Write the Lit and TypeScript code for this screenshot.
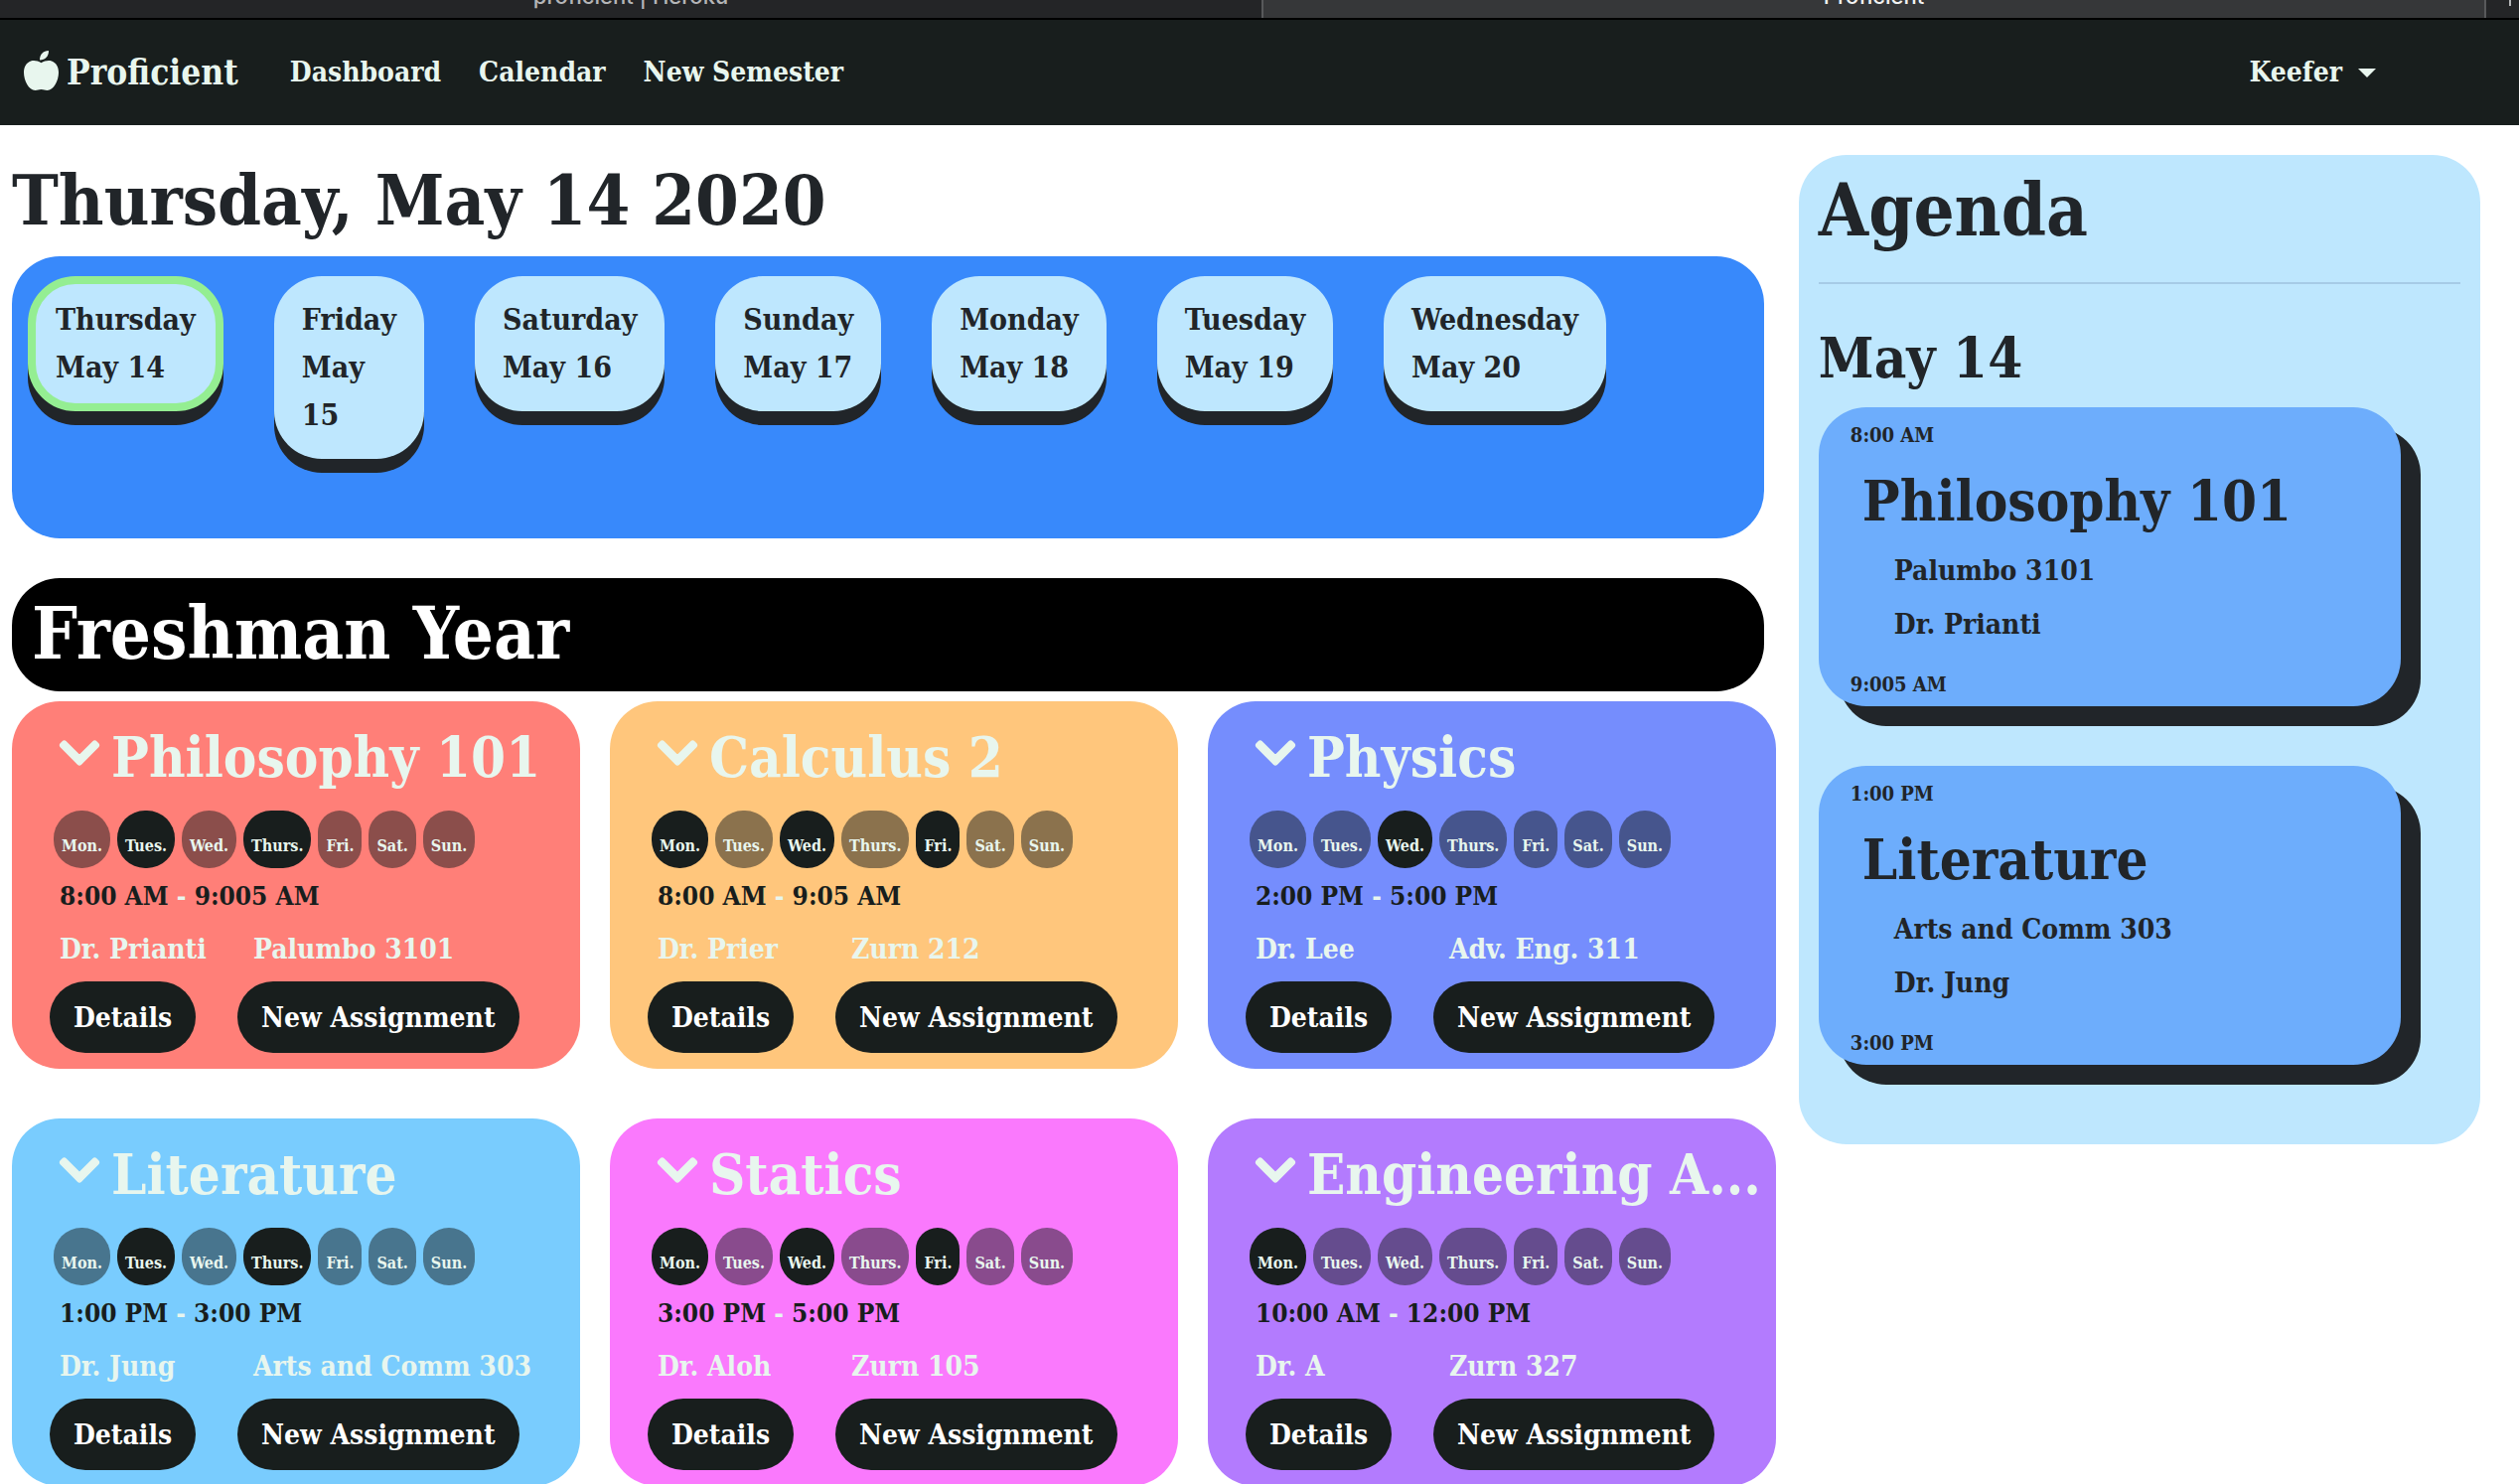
import { LitElement, html, css, svg } from "lit";
import { customElement, property } from "lit/decorators.js";
import { classMap } from "lit/directives/class-map.js";
import { styleMap } from "lit/directives/style-map.js";

interface Course {
  name: string;
  days: string[];
  start: string;
  end: string;
  professor: string;
  room: string;
  color: string;
}

const WEEKDAYS = ["Mon.", "Tues.", "Wed.", "Thurs.", "Fri.", "Sat.", "Sun."];

const WEEK = [
  ["Thursday", "May 14"],
  ["Friday", "May 15"],
  ["Saturday", "May 16"],
  ["Sunday", "May 17"],
  ["Monday", "May 18"],
  ["Tuesday", "May 19"],
  ["Wednesday", "May 20"],
];

const COURSES: Course[] = [
  { name: "Philosophy 101", days: ["Tues.", "Thurs."], start: "8:00 AM", end: "9:005 AM", professor: "Dr. Prianti", room: "Palumbo 3101", color: "#ff7f78" },
  { name: "Calculus 2", days: ["Mon.", "Wed.", "Fri."], start: "8:00 AM", end: "9:05 AM", professor: "Dr. Prier", room: "Zurn 212", color: "#ffc67c" },
  { name: "Physics", days: ["Wed."], start: "2:00 PM", end: "5:00 PM", professor: "Dr. Lee", room: "Adv. Eng. 311", color: "#758dfd" },
  { name: "Literature", days: ["Tues.", "Thurs."], start: "1:00 PM", end: "3:00 PM", professor: "Dr. Jung", room: "Arts and Comm 303", color: "#79ccfe" },
  { name: "Statics", days: ["Mon.", "Wed.", "Fri."], start: "3:00 PM", end: "5:00 PM", professor: "Dr. Aloh", room: "Zurn 105", color: "#fa79fd" },
  { name: "Engineering A...", days: ["Mon."], start: "10:00 AM", end: "12:00 PM", professor: "Dr. A", room: "Zurn 327", color: "#b37bfe" },
];

const appleIcon = svg`<path d="M17.500 12.200C14 10.200 10 9.600 7 10.600 2.500 12.200 0 16.500 0 22c0 8 5 18 11.500 18 2.200 0 3.800-1 6-1s3.800 1 6 1C30 40 35 30 35 22c0-5.500-2.500-9.800-7-11.400-3-1-7-.4-10.500 1.600z"/><path d="M16 9.500C15.800 4 19.500 0 25 0c.2 5.500-3.500 9.500-9 9.500z"/>`;

const chevronIcon = svg`<path d="M207.029 381.476L12.686 187.132c-9.373-9.373-9.373-24.569 0-33.941l22.667-22.667c9.357-9.357 24.522-9.375 33.901-.04L224 284.505l154.745-154.021c9.379-9.335 24.544-9.317 33.901.04l22.667 22.667c9.373 9.373 9.373 24.569 0 33.941L240.971 381.476c-9.373 9.372-24.569 9.372-33.942 0z"/>`;

const base = css`
  :host {
    display: block;
    box-sizing: border-box;
  }
  * {
    box-sizing: border-box;
  }
  h1,
  h2,
  h3,
  p,
  ul {
    margin: 0;
    padding: 0;
    font-size: inherit;
    font-weight: inherit;
    list-style: none;
  }
  button {
    border: 0;
    margin: 0;
    padding: 0;
    background: none;
    color: inherit;
    font: inherit;
    cursor: pointer;
  }
  a {
    color: inherit;
    text-decoration: none;
  }
`;

@customElement("browser-tabs")
export class BrowserTabs extends LitElement {
  static styles = [
    base,
    css`
      :host {
        height: 20px;
        border-bottom: 2px solid #000;
        background: #242527;
        font: 500 22px/26px Inter, "Liberation Sans", sans-serif;
        overflow: hidden;
      }
      .tabs {
        display: grid;
        grid-template-columns: 1270fr 1233fr 33fr;
        height: 100%;
      }
      .tab {
        display: flex;
        align-items: flex-end;
        justify-content: center;
        height: 18px;
        padding-bottom: 9px;
        color: #b4b5b7;
      }
      .active {
        background: #363739;
        border: solid #58595b;
        border-width: 0 2px;
        color: #f2f2f2;
      }
      .add {
        justify-self: end;
        width: 2px;
        height: 6px;
        margin-right: 8px;
        background: #b4b5b7;
      }
    `,
  ];

  render() {
    return html`<div class="tabs">
      <div class="tab">proficient | Heroku</div>
      <div class="tab active">Proficient</div>
      <span class="add"></span>
    </div>`;
  }
}

@customElement("nav-bar")
export class NavBar extends LitElement {
  static styles = [
    base,
    css`
      nav {
        display: flex;
        align-items: center;
        height: 106px;
        padding: 0 144px 0 24px;
        background: #181e1d;
        color: #e8f6ee;
      }
      .brand {
        display: flex;
        align-items: center;
        gap: 8px;
        margin-right: 52px;
        font-size: 35px;
      }
      .brand svg {
        width: 35px;
        height: 40px;
        margin-bottom: 4px;
        fill: currentColor;
      }
      .links {
        display: flex;
        gap: 38px;
      }
      .user {
        display: flex;
        align-items: center;
        gap: 16px;
        margin-left: auto;
      }
      .caret {
        border: solid transparent;
        border-width: 9px 9px 0;
        border-top-color: currentColor;
      }
    `,
  ];

  render() {
    return html`<nav>
      <a class="brand" href="#"><svg viewBox="0 0 35 40" aria-hidden="true">${appleIcon}</svg>Proficient</a>
      <div class="links">
        <a href="#dashboard">Dashboard</a>
        <a href="#calendar">Calendar</a>
        <a href="#new-semester">New Semester</a>
      </div>
      <button class="user">Keefer<span class="caret"></span></button>
    </nav>`;
  }
}

@customElement("week-strip")
export class WeekStrip extends LitElement {
  static styles = [
    base,
    css`
      .week {
        display: flex;
        align-items: flex-start;
        gap: 51px;
        padding: 20px 16px 80px;
        border-radius: 48px;
        background: #3889fb;
        font-size: 30px;
      }
      .day {
        width: min-content;
        padding: 20px 28px;
        border-radius: 48px;
        background: #bee7fe;
        box-shadow: 0 14px 0 #212529;
      }
      .today {
        padding: 12px 20px;
        border: 8px solid #94ee92;
      }
    `,
  ];

  render() {
    return html`<ul class="week">
      ${WEEK.map(
        ([day, date], i) => html`<li class=${classMap({ day: true, today: i === 0 })}>
          <p>${day}</p>
          <p>${date}</p>
        </li>`
      )}
    </ul>`;
  }
}

@customElement("course-card")
export class CourseCard extends LitElement {
  @property({ attribute: false }) course!: Course;

  static styles = [
    base,
    css`
      .card {
        padding: 18px 8px 16px 38px;
        border-radius: 48px;
        color: #e8f6ee;
      }
      .head {
        display: flex;
        align-items: flex-start;
        gap: 12px;
        padding-left: 10px;
        font-size: 56px;
        line-height: 76px;
        white-space: nowrap;
      }
      .toggle {
        margin-top: 10px;
        line-height: 0;
      }
      .toggle svg {
        width: 40px;
        height: 48px;
        overflow: visible;
        fill: currentColor;
        stroke: currentColor;
        stroke-width: 16px;
      }
      .days {
        display: flex;
        gap: 7px;
        margin: 16px 0 4px;
        padding-left: 4px;
        font-size: 16px;
        line-height: 36px;
      }
      .day {
        padding: 18px 8px 4px;
        border-radius: 28px;
        background: rgba(24, 30, 29, 0.5);
      }
      .on {
        background: #181e1d;
      }
      .time,
      .info {
        padding-left: 10px;
      }
      .time {
        font-size: 26px;
      }
      .time b {
        color: #181e1d;
      }
      .info {
        display: grid;
        grid-template-columns: 195px 1fr;
        margin: 6px 0 8px;
        white-space: nowrap;
      }
      .actions {
        display: grid;
        grid-template-columns: 189px 1fr;
        justify-items: start;
      }
      .btn {
        padding: 13px 24px 11px;
        border-radius: 36px;
        background: #181e1d;
        color: #fff;
        white-space: nowrap;
      }
    `,
  ];

  render() {
    const c = this.course;
    return html`<article class="card" style=${styleMap({ background: c.color })}>
      <div class="head">
        <button class="toggle" aria-label="Toggle">
          <svg viewBox="0 0 448 512" aria-hidden="true">${chevronIcon}</svg>
        </button>
        <h3>${c.name}</h3>
      </div>
      <ul class="days">
        ${WEEKDAYS.map((d) => html`<li class=${classMap({ day: true, on: c.days.includes(d) })}>${d}</li>`)}
      </ul>
      <p class="time"><b>${c.start}</b> - <b>${c.end}</b></p>
      <div class="info"><span>${c.professor}</span><span>${c.room}</span></div>
      <div class="actions">
        <button class="btn">Details</button>
        <button class="btn">New Assignment</button>
      </div>
    </article>`;
  }
}

@customElement("agenda-panel")
export class AgendaPanel extends LitElement {
  static styles = [
    base,
    css`
      .panel {
        padding: 8px 20px 80px;
        border-radius: 48px;
        background: #bee7fe;
      }
      h1 {
        font-size: 72px;
        line-height: 96px;
      }
      hr {
        height: 2px;
        margin: 24px 0 36px;
        border: 0;
        background: rgba(0, 0, 60, 0.12);
      }
      h2,
      h3 {
        font-size: 56px;
        line-height: 76px;
      }
      .list {
        display: grid;
        gap: 60px;
        margin: 12px 60px 0 0;
      }
      .item {
        padding: 10px 32px 4px;
        border-radius: 48px;
        background: #6dadfc;
        box-shadow: 20px 20px 0 #212529;
      }
      .clock {
        font-size: 20px;
        line-height: 36px;
      }
      .body {
        display: grid;
        gap: 6px;
        margin: 10px 0 18px 12px;
      }
      .detail {
        margin-left: 32px;
      }
      h3 {
        margin-bottom: 3px;
      }
    `,
  ];

  render() {
    return html`<section class="panel">
      <h1>Agenda</h1>
      <hr />
      <h2>May 14</h2>
      <div class="list">
        ${[COURSES[0], COURSES[3]].map(
          (c) => html`<article class="item">
            <p class="clock">${c.start}</p>
            <div class="body">
              <h3>${c.name}</h3>
              <p class="detail">${c.room}</p>
              <p class="detail">${c.professor}</p>
            </div>
            <p class="clock">${c.end}</p>
          </article>`
        )}
      </div>
    </section>`;
  }
}

@customElement("app-root")
export class AppRoot extends LitElement {
  static styles = [
    base,
    css`
      :host {
        height: 100vh;
        overflow: hidden;
        background: #fff;
        color: #212529;
        font: bold 28px/48px "DejaVu Serif Condensed", "DejaVu Serif", serif;
      }
      main {
        display: grid;
        grid-template-columns: minmax(0, 44fr) minmax(0, 17fr);
        align-items: start;
        gap: 23px;
        padding: 28px 39px 0 12px;
      }
      h1,
      h2 {
        font-size: 70px;
        line-height: 96px;
      }
      week-strip {
        margin: 8px 12px 40px 0;
      }
      .year {
        margin: 0 12px 10px 0;
        padding: 8px 20px 10px;
        border-radius: 48px;
        background: #000;
        color: #fff;
        font-size: 72px;
      }
      .courses {
        display: grid;
        grid-template-columns: repeat(3, minmax(0, 1fr));
        gap: 50px 30px;
      }
      agenda-panel {
        margin-top: 2px;
      }
    `,
  ];

  render() {
    return html`
      <browser-tabs></browser-tabs>
      <nav-bar></nav-bar>
      <main>
        <div>
          <h1>Thursday, May 14 2020</h1>
          <week-strip></week-strip>
          <h2 class="year">Freshman Year</h2>
          <div class="courses">${COURSES.map((c) => html`<course-card .course=${c}></course-card>`)}</div>
        </div>
        <agenda-panel></agenda-panel>
      </main>
    `;
  }
}
